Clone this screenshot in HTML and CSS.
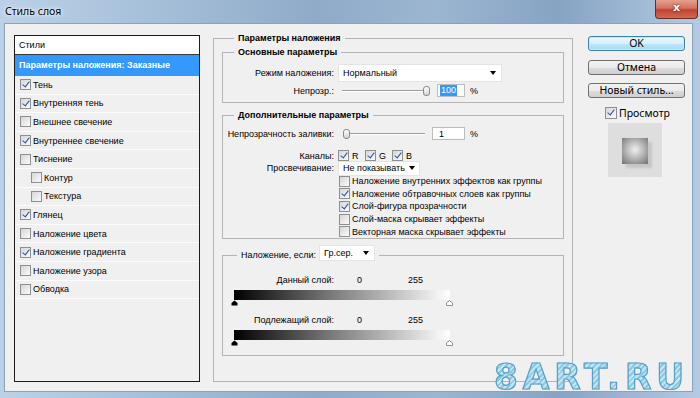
FILE: index.html
```html
<!DOCTYPE html>
<html lang="ru">
<head>
    <meta charset="UTF-8">
    <title>Стиль слоя</title>
    <link rel="stylesheet" href="styles.css">
</head>
<body>

<div class="window">
    <div class="titlebar">
        <span class="title">Стиль слоя</span>
        <span class="close">x</span>
    </div>

    <div class="client">

        <!-- список стилей слева -->
        <div class="styles_list">
            <div class="styles_head">Стили</div>
            <div class="styles_sel">Параметры наложения: Заказные</div>
            <div class="style_row"><span class="cb on"></span>Тень</div>
            <div class="style_row"><span class="cb on"></span>Внутренняя тень</div>
            <div class="style_row"><span class="cb"></span>Внешнее свечение</div>
            <div class="style_row"><span class="cb on"></span>Внутреннее свечение</div>
            <div class="style_row"><span class="cb"></span>Тиснение</div>
            <div class="style_row sub"><span class="cb"></span>Контур</div>
            <div class="style_row sub"><span class="cb"></span>Текстура</div>
            <div class="style_row"><span class="cb on"></span>Глянец</div>
            <div class="style_row"><span class="cb"></span>Наложение цвета</div>
            <div class="style_row"><span class="cb on"></span>Наложение градиента</div>
            <div class="style_row"><span class="cb"></span>Наложение узора</div>
            <div class="style_row"><span class="cb"></span>Обводка</div>
        </div>

        <!-- параметры наложения -->
        <fieldset class="group_main">
            <legend>Параметры наложения</legend>

            <fieldset class="group g_basic">
                <legend>Основные параметры</legend>
                <div class="row h18">
                    <span class="lbl">Режим наложения:</span>
                    <span class="select sel_mode">Нормальный<i class="arrow"></i></span>
                </div>
                <div class="row h13 mt2">
                    <span class="lbl">Непрозр.:</span>
                    <span class="slider sl_op"><i class="knob"></i></span>
                    <span class="num num_op"><span class="hl">100</span></span>
                    <span class="pct">%</span>
                </div>
            </fieldset>

            <fieldset class="group g_extra">
                <legend>Дополнительные параметры</legend>
                <div class="row h13">
                    <span class="lbl">Непрозрачность заливки:</span>
                    <span class="slider sl_fill"><i class="knob"></i></span>
                    <span class="num num_fill">1</span>
                    <span class="pct">%</span>
                </div>
                <div class="row h11 mt10">
                    <span class="lbl">Каналы:</span>
                    <span class="chan"><span class="cb on"></span>R</span>
                    <span class="chan"><span class="cb on"></span>G</span>
                    <span class="chan"><span class="cb on"></span>B</span>
                </div>
                <div class="row h14">
                    <span class="lbl">Просвечивание:</span>
                    <span class="select sel_ko">Не показывать<i class="arrow"></i></span>
                </div>
                <div class="opt"><span class="cb"></span>Наложение внутренних эффектов как группы</div>
                <div class="opt"><span class="cb on"></span>Наложение обтравочных слоев как группы</div>
                <div class="opt"><span class="cb on"></span>Слой-фигура прозрачности</div>
                <div class="opt"><span class="cb"></span>Слой-маска скрывает эффекты</div>
                <div class="opt"><span class="cb"></span>Векторная маска скрывает эффекты</div>
            </fieldset>

            <fieldset class="group g_blendif">
                <legend><span>Наложение, если:</span><span class="select sel_gray">Гр.сер.<i class="arrow"></i></span></legend>
                <div class="row h12">
                    <span class="lbl">Данный слой:</span>
                    <span class="val0">0</span>
                    <span class="val255">255</span>
                </div>
                <div class="ramp"></div>
                <div class="stops">
                    <svg width="7" height="6" viewBox="0 0 7 6"><path d="M3.5 0.5 L6.5 3 V5.5 H0.5 V3 Z" fill="#000"/></svg>
                    <svg width="7" height="6" viewBox="0 0 7 6"><path d="M3.5 0.5 L6.5 3 V5.5 H0.5 V3 Z" fill="#fff" stroke="#777" stroke-width="0.8"/></svg>
                </div>
                <div class="row h12 mt8">
                    <span class="lbl">Подлежащий слой:</span>
                    <span class="val0">0</span>
                    <span class="val255">255</span>
                </div>
                <div class="ramp"></div>
                <div class="stops">
                    <svg width="7" height="6" viewBox="0 0 7 6"><path d="M3.5 0.5 L6.5 3 V5.5 H0.5 V3 Z" fill="#000"/></svg>
                    <svg width="7" height="6" viewBox="0 0 7 6"><path d="M3.5 0.5 L6.5 3 V5.5 H0.5 V3 Z" fill="#fff" stroke="#777" stroke-width="0.8"/></svg>
                </div>
            </fieldset>
        </fieldset>

        <!-- кнопки справа -->
        <div class="side">
            <span class="btn btn_def">OK</span>
            <span class="btn">Отмена</span>
            <span class="btn">Новый стиль...</span>
            <div class="preview_cb"><span class="cb on"></span>Просмотр</div>
            <div class="preview"><div class="swatch"></div></div>
        </div>

    </div>

    <div class="watermark">8ART.RU</div>
</div>

</body>
</html>
```

FILE: styles.css
```css
* {
    box-sizing: border-box;
}

body {
    margin: 0;
    width: 700px;
    height: 398px;
    overflow: hidden;
    font-family: "Liberation Sans", Arial, sans-serif;
    font-size: 9px;
    color: #000;
}

/* окно и рамка Aero */
.window {
    position: relative;
    width: 700px;
    height: 398px;
    display: flex;
    flex-direction: column;
    background: linear-gradient(90deg, #bcd1e7 0%, #a6bfd9 22%, #8fabc8 45%, #9cb6d1 62%, #86a4c3 80%, #b3cae2 100%);
}

.titlebar {
    height: 23px;
    display: flex;
    justify-content: space-between;
    align-items: flex-start;
}

.title {
    margin: 4px 0 0 5px;
    font-family: "Noto Sans", sans-serif;
    font-size: 10.5px;
    line-height: 14px;
    text-shadow: 0 0 5px #fff, 0 0 3px #fff;
}

.close {
    width: 43px;
    height: 19px;
    margin-right: 2px;
    border: 1px solid #6e2b22;
    border-top: none;
    border-radius: 0 0 4px 4px;
    background: linear-gradient(#e6a08f 0%, #d2725d 45%, #c0432f 55%, #d06a52 100%);
    color: #fff;
    font: bold 11px "DejaVu Sans", sans-serif;
    line-height: 16px;
    text-align: center;
    text-shadow: 0 0 2px #5a1a10;
}

.client {
    flex: 1;
    margin: 0 7px 6px 4px;
    padding: 8px 0 0 9px;
    background: #f0f0f0;
    border: 1px solid #8aa2bb;
    display: flex;
    align-items: flex-start;
}

/* список стилей */
.styles_list {
    width: 186px;
    height: 347px;
    margin-top: 3px;
    border: 1px solid #1c1c1c;
    background: #f0f0f0;
    flex: none;
}

.styles_head {
    height: 19px;
    padding-left: 4px;
    line-height: 18px;
    background: #fff;
    border-bottom: 1px solid #3a3a3a;
}

.styles_sel {
    height: 21px;
    padding-left: 4px;
    line-height: 21px;
    background: #3399ff;
    color: #fff;
    font-weight: bold;
}

.style_row {
    height: 18.6px;
    padding-left: 5px;
    display: flex;
    align-items: center;
    border-bottom: 1px solid #fcfcfc;
}

.style_row .cb {
    margin-right: 2px;
}

.style_row.sub {
    padding-left: 16px;
}

/* чекбокс */
.cb {
    position: relative;
    display: inline-block;
    flex: none;
    width: 11px;
    height: 11px;
    border: 1px solid #8e8f8f;
    background: linear-gradient(135deg, #d6d6d6, #fbfbfb);
}

.cb.on::after {
    content: "";
    position: absolute;
    left: 3px;
    top: 0;
    width: 3px;
    height: 6px;
    border: solid #2d52a6;
    border-width: 0 1.5px 1.5px 0;
    transform: rotate(38deg);
}

/* группы */
fieldset {
    margin: 0;
    padding: 0;
    min-inline-size: 0;
    border: 1px solid #b4b4b4;
}

legend {
    padding: 0 4px;
    line-height: 12px;
    font-weight: bold;
}

.group_main {
    width: 360px;
    margin-left: 13px;
    padding: 0 8px 25px;
    flex: none;
}

.group_main > legend {
    margin-left: 12px;
}

.group > legend {
    margin-left: 11px;
}

.g_basic {
    margin-top: 2px;
    padding: 6px 0 5px;
}

.g_extra {
    margin-top: 6px;
    padding: 6px 0 0;
}

.g_blendif {
    margin-top: 11px;
    padding: 13px 0 9px;
}

.g_blendif > legend {
    height: 11px;
    margin-left: 14px;
    font-weight: normal;
    display: flex;
    align-items: flex-start;
}

.g_blendif > legend span:first-child {
    margin-top: -1px;
}

.row {
    display: flex;
    align-items: center;
}

.h18 { height: 18px; }
.h14 { height: 14px; }
.h13 { height: 13px; }
.h12 { height: 12px; }
.h11 { height: 11px; }
.mt2 { margin-top: 2px; }
.mt8 { margin-top: 8px; }
.mt10 { margin-top: 10px; }

.lbl {
    flex: none;
    width: 111px;
    margin-right: 4px;
    text-align: right;
}

.select {
    display: flex;
    align-items: center;
    justify-content: space-between;
    padding: 0 5px 0 4px;
    background: #fff;
    border: 1px solid #e4e4e4;
    white-space: nowrap;
}

.sel_mode {
    width: 164px;
    height: 18px;
}

.sel_ko {
    width: 82px;
    height: 15px;
    padding-right: 4px;
}

.sel_gray {
    width: 56px;
    height: 16px;
    margin: -5px 0 0 3px;
}

.arrow {
    flex: none;
    width: 0;
    height: 0;
    border-left: 3.5px solid transparent;
    border-right: 3.5px solid transparent;
    border-top: 4px solid #000;
}

/* ползунки */
.slider {
    display: flex;
    align-items: center;
    height: 13px;
    background: linear-gradient(to bottom, transparent 6px, #9d9d9d 6px, #9d9d9d 7px, #fff 7px, #fff 8px, transparent 8px);
}

.sl_op {
    width: 88px;
    margin-left: 4px;
    justify-content: flex-end;
}

.sl_fill {
    width: 82px;
    margin-left: 5px;
}

.knob {
    width: 7px;
    height: 10px;
    border: 1px solid #888;
    border-radius: 3px;
    background: linear-gradient(#fff, #d4d4d4);
}

.num {
    height: 13px;
    background: #fff;
    border: 1px solid #bcbcbc;
    display: flex;
    align-items: center;
}

.num_op {
    width: 28px;
    margin-left: 7px;
    padding-left: 2px;
}

.hl {
    background: #3399ff;
    color: #fff;
    line-height: 11px;
    padding: 0 1px;
}

.num_fill {
    width: 33px;
    margin-left: 7px;
    padding-left: 6px;
}

.pct {
    margin-left: 5px;
}

.chan {
    display: flex;
    align-items: center;
    width: 27px;
}

.chan:first-of-type {
    margin-left: 1px;
}

.chan .cb {
    margin-right: 3px;
}

.opt {
    height: 12.6px;
    padding-left: 116px;
    display: flex;
    align-items: center;
}

.opt .cb {
    margin-right: 2px;
}

/* шкалы "Наложение, если" */
.val0 {
    margin-left: 19px;
}

.val255 {
    margin-left: 46px;
}

.ramp {
    width: 216px;
    height: 10px;
    margin: 4px 0 0 11px;
    background: linear-gradient(90deg, #000 0%, #7a7a7a 45%, #fff 100%);
}

.stops {
    width: 222px;
    height: 6px;
    margin-left: 8px;
    display: flex;
    justify-content: space-between;
}

.stops svg {
    display: block;
}

/* правая колонка */
.side {
    width: 97px;
    margin: 4px 0 0 15px;
    display: flex;
    flex-direction: column;
    flex: none;
}

.btn {
    height: 15px;
    margin-bottom: 8.5px;
    border: 1px solid #707070;
    border-radius: 3px;
    background: linear-gradient(#f2f2f2 0%, #ebebeb 50%, #dddddd 51%, #cfcfcf 100%);
    font-family: "Noto Sans", sans-serif;
    font-size: 10.5px;
    line-height: 13px;
    text-align: center;
}

.btn_def {
    border-color: #3c7fb1;
    background: linear-gradient(#eaf6fd 0%, #d9f0fc 50%, #bee6fd 51%, #a7d9f5 100%);
    box-shadow: inset 0 0 0 1px #c4ecfc;
}

.preview_cb {
    display: flex;
    align-items: center;
    height: 12px;
    margin: 0 0 4px 17px;
    font-family: "Noto Sans", sans-serif;
    font-size: 10.5px;
}

.preview_cb .cb {
    width: 12px;
    height: 12px;
    margin-right: 2px;
}

.preview {
    width: 54px;
    height: 54px;
    margin-left: 20px;
    padding: 15px 0 0 14px;
    background: #dedede;
}

.swatch {
    width: 26px;
    height: 26px;
    background: radial-gradient(circle at 50% 45%, #efefef 0%, #b8b8b8 45%, #707070 100%);
    box-shadow: 4px 4px 2px #c6c6c6;
}

/* водяной знак */
.watermark {
    position: absolute;
    left: 494px;
    top: 357px;
    font: bold 35px "DejaVu Sans", sans-serif;
    line-height: 40px;
    letter-spacing: 5px;
    color: transparent;
    background: repeating-linear-gradient(135deg, #c4e6f5 0, #c4e6f5 2px, #8ac8e3 2px, #8ac8e3 4px);
    -webkit-background-clip: text;
    background-clip: text;
    -webkit-text-stroke: 1.2px #5a9fc6;
    transform: scaleX(0.98);
    transform-origin: left top;
}
```
